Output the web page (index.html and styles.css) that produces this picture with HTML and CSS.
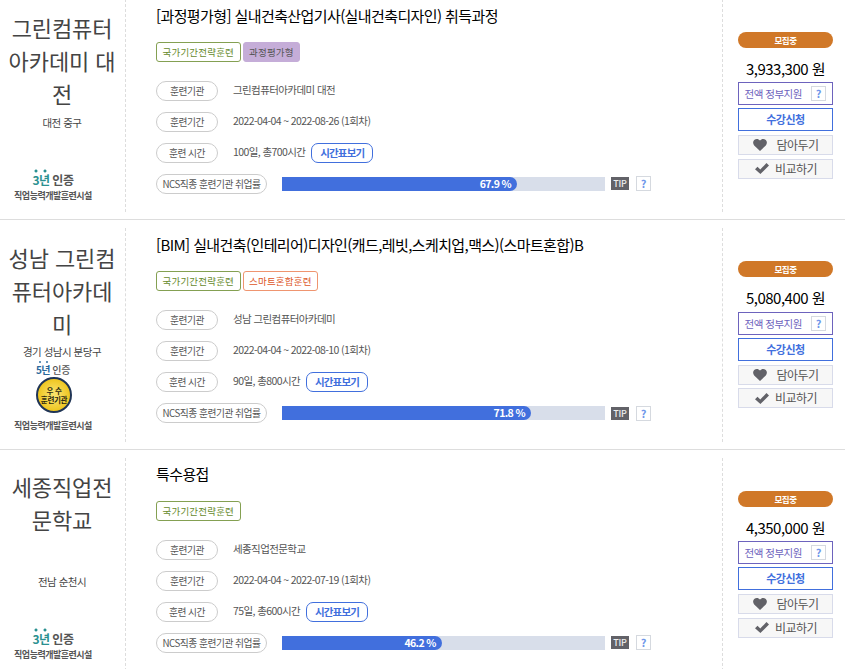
FILE: index.html
```
<!DOCTYPE html>
<html lang="ko">
<head>
    <meta charset="UTF-8">
    <meta name="viewport" content="width=device-width, initial-scale=1.0">
    <title>훈련과정 검색</title>
    <link rel="stylesheet" href="styles.css">
</head>
<body>
    <!-- Shared icons -->
    <svg class="sprite" width="0" height="0">
        <symbol id="icon-heart" viewBox="0 0 14 12">
            <path d="M7 12 1.2 6.4C-.3 4.8-.2 2.2 1.2 1 2.9-.5 5.6-.3 7 1.6 8.4-.3 11.1-.5 12.8 1c1.4 1.2 1.5 3.8 0 5.4z"/>
        </symbol>
        <symbol id="icon-check" viewBox="0 0 14 11">
            <path d="M0 6.2 2.5 3.7 5.3 6.4 11.5 0 14 2.4 5.4 11z"/>
        </symbol>
    </svg>

    <ul class="course-list">
        <li class="course">
            <div class="org">
                <div class="org-name">그린컴퓨터아카데미 대전</div>
                <div class="org-area">대전 중구</div>
                <div class="cert">
                    <div class="cert-head"><span class="cert-year">3년</span> 인증</div>
                    <div class="cert-name">직업능력개발훈련시설</div>
                </div>
            </div>
            <div class="info">
                <h3 class="title">[과정평가형] 실내건축산업기사(실내건축디자인) 취득과정</h3>
                <div class="tags">
                    <span class="tag tag-green">국가기간전략훈련</span>
                    <span class="tag tag-purple">과정평가형</span>
                </div>
                <div class="row"><span class="label">훈련기관</span><span class="value">그린컴퓨터아카데미 대전</span></div>
                <div class="row"><span class="label">훈련기간</span><span class="value">2022-04-04 ~ 2022-08-26 (1회차)</span></div>
                <div class="row"><span class="label">훈련 시간</span><span class="value">100일, 총700시간</span><button type="button" class="btn-time">시간표보기</button></div>
                <div class="row">
                    <span class="label label-wide">NCS직종 훈련기관 취업률</span>
                    <div class="bar"><div class="bar-fill" style="width: 72.8%">67.9 %</div></div>
                    <span class="tip">TIP</span><span class="help">?</span>
                </div>
            </div>
            <div class="side">
                <div class="status">모집중</div>
                <div class="price">3,933,300 원</div>
                <div class="support">전액 정부지원<span class="help">?</span></div>
                <button type="button" class="btn-apply">수강신청</button>
                <button type="button" class="btn-gray btn-keep"><svg width="14" height="12"><use href="#icon-heart"/></svg>담아두기</button>
                <button type="button" class="btn-gray btn-compare"><svg width="14" height="11"><use href="#icon-check"/></svg>비교하기</button>
            </div>
        </li>

        <li class="course">
            <div class="org">
                <div class="org-name">성남 그린컴퓨터아카데미</div>
                <div class="org-area">경기 성남시 분당구</div>
                <div class="cert cert-best">
                    <div class="cert-head"><span class="cert-year">5년</span> 인증</div>
                    <div class="cert-seal"><span>우 수</span><span>훈련기관</span></div>
                    <div class="cert-name">직업능력개발훈련시설</div>
                </div>
            </div>
            <div class="info">
                <h3 class="title">[BIM] 실내건축(인테리어)디자인(캐드,레빗,스케치업,맥스)(스마트혼합)B</h3>
                <div class="tags">
                    <span class="tag tag-green">국가기간전략훈련</span>
                    <span class="tag tag-orange">스마트혼합훈련</span>
                </div>
                <div class="row"><span class="label">훈련기관</span><span class="value">성남 그린컴퓨터아카데미</span></div>
                <div class="row"><span class="label">훈련기간</span><span class="value">2022-04-04 ~ 2022-08-10 (1회차)</span></div>
                <div class="row"><span class="label">훈련 시간</span><span class="value">90일, 총800시간</span><button type="button" class="btn-time">시간표보기</button></div>
                <div class="row">
                    <span class="label label-wide">NCS직종 훈련기관 취업률</span>
                    <div class="bar"><div class="bar-fill" style="width: 77.1%">71.8 %</div></div>
                    <span class="tip">TIP</span><span class="help">?</span>
                </div>
            </div>
            <div class="side">
                <div class="status">모집중</div>
                <div class="price">5,080,400 원</div>
                <div class="support">전액 정부지원<span class="help">?</span></div>
                <button type="button" class="btn-apply">수강신청</button>
                <button type="button" class="btn-gray btn-keep"><svg width="14" height="12"><use href="#icon-heart"/></svg>담아두기</button>
                <button type="button" class="btn-gray btn-compare"><svg width="14" height="11"><use href="#icon-check"/></svg>비교하기</button>
            </div>
        </li>

        <li class="course">
            <div class="org">
                <div class="org-name">세종직업전문학교</div>
                <div class="org-area">전남 순천시</div>
                <div class="cert">
                    <div class="cert-head"><span class="cert-year">3년</span> 인증</div>
                    <div class="cert-name">직업능력개발훈련시설</div>
                </div>
            </div>
            <div class="info">
                <h3 class="title">특수용접</h3>
                <div class="tags">
                    <span class="tag tag-green">국가기간전략훈련</span>
                </div>
                <div class="row"><span class="label">훈련기관</span><span class="value">세종직업전문학교</span></div>
                <div class="row"><span class="label">훈련기간</span><span class="value">2022-04-04 ~ 2022-07-19 (1회차)</span></div>
                <div class="row"><span class="label">훈련 시간</span><span class="value">75일, 총600시간</span><button type="button" class="btn-time">시간표보기</button></div>
                <div class="row">
                    <span class="label label-wide">NCS직종 훈련기관 취업률</span>
                    <div class="bar"><div class="bar-fill" style="width: 49.5%">46.2 %</div></div>
                    <span class="tip">TIP</span><span class="help">?</span>
                </div>
            </div>
            <div class="side">
                <div class="status">모집중</div>
                <div class="price">4,350,000 원</div>
                <div class="support">전액 정부지원<span class="help">?</span></div>
                <button type="button" class="btn-apply">수강신청</button>
                <button type="button" class="btn-gray btn-keep"><svg width="14" height="12"><use href="#icon-heart"/></svg>담아두기</button>
                <button type="button" class="btn-gray btn-compare"><svg width="14" height="11"><use href="#icon-check"/></svg>비교하기</button>
            </div>
        </li>
    </ul>
</body>
</html>
```

FILE: styles.css
```
* {
    box-sizing: border-box;
}
html {
    overflow: hidden;
}
body {
    margin: 0;
    height: 669px;
    overflow: hidden;
    background-color: #fff;
    color: #444;
    font-family: "Noto Sans CJK KR", sans-serif;
}
button {
    padding: 0;
    font-family: inherit;
    cursor: pointer;
}
.sprite {
    display: block;
}
.course-list {
    width: 845px;
    margin: -9.5px 0 0;
    padding: 0;
    list-style: none;
}
.course {
    display: flex;
    height: 229.5px;
    padding: 8px 0 7px;
    border-bottom: 1px solid #ddd;
}

/* Training institute */
.org {
    display: flex;
    flex-direction: column;
    width: 126px;
    padding: 12.5px 1px 9px 0;
    border-right: 1px dashed #ddd;
    text-align: center;
}
.org-name {
    min-height: 99px;
    padding: 0 6px;
    font-size: 22px;
    line-height: 33px;
    letter-spacing: -0.1px;
    word-break: break-all;
}
.org-area {
    margin-top: 4.5px;
    font-size: 10.5px;
    line-height: 16px;
    letter-spacing: -0.5px;
}
.cert {
    width: 80px;
    margin: auto 0 0 13px;
    color: #555;
    font-weight: 700;
}
.cert-head {
    font-size: 12px;
    line-height: 16px;
    letter-spacing: -0.4px;
}
.cert-year {
    padding-top: 2px;
    background: radial-gradient(circle at 4px 2px, #2a9090 1.2px, transparent 1.8px),
                radial-gradient(circle at 13px 2px, #2a9090 1.2px, transparent 1.8px);
    color: #2a9090;
    letter-spacing: -0.6px;
}
.cert-name {
    font-size: 9px;
    line-height: 15px;
    letter-spacing: -0.5px;
    white-space: nowrap;
}
.cert-best .cert-head {
    font-size: 10px;
    font-weight: 500;
    line-height: 13px;
}
.cert-best .cert-year {
    background: radial-gradient(circle at 4px 2px, #28689c 0.5px, transparent 1.2px),
                radial-gradient(circle at 11px 2px, #28689c 0.5px, transparent 1.2px);
    color: #28689c;
    font-weight: 700;
}
.cert-seal {
    display: flex;
    flex-direction: column;
    align-items: center;
    justify-content: center;
    width: 36px;
    height: 36px;
    margin: 1px 0 5px 23px;
    border: 2px solid #203556;
    border-radius: 50%;
    background: radial-gradient(#f8e066 15%, #eec41a 75%, #b08a20);
    color: #2a2810;
    font-size: 7.5px;
    line-height: 9px;
    letter-spacing: -0.3px;
    white-space: nowrap;
}

/* Course details */
.info {
    width: 597px;
    padding: 4.5px 0 0 30px;
    border-right: 1px dashed #ddd;
}
.title {
    margin: 0;
    color: #000;
    font-size: 15px;
    font-weight: 400;
    line-height: 24px;
    letter-spacing: -0.6px;
}
.course:first-child .title {
    padding-top: 1px;
    margin-bottom: -1px;
}
.tags {
    display: flex;
    gap: 2px;
    margin: 14.5px 0 19px;
}
.tag {
    height: 20px;
    padding: 0 5.5px;
    border: 1px solid;
    border-radius: 3px;
    font-size: 9.5px;
    line-height: 18px;
    letter-spacing: 0.2px;
}
.tag-green {
    border-color: #84a052;
    color: #668a2d;
}
.tag-purple {
    border-color: #c5add8;
    background-color: #c5add8;
    color: #555;
}
.tag-orange {
    border-color: #ef9570;
    color: #dd5527;
}
.row {
    display: flex;
    align-items: center;
    height: 20px;
    margin-bottom: 11px;
}
.label {
    width: 62px;
    height: 20px;
    margin-right: 15px;
    border: 1px solid #ccc;
    border-radius: 10px;
    color: #555;
    font-size: 9.75px;
    line-height: 18px;
    letter-spacing: -0.5px;
    text-align: center;
}
.label-wide {
    width: 111px;
}
.value {
    padding-bottom: 1.5px;
    font-size: 10.5px;
    line-height: 18px;
    letter-spacing: -0.6px;
    color: #555;
}
.btn-time {
    width: 62px;
    height: 20px;
    margin-left: 6px;
    border: 1px solid #416fdd;
    border-radius: 7px;
    background-color: #fff;
    color: #416fdd;
    font-size: 10.5px;
    font-weight: 700;
    line-height: 18px;
    letter-spacing: -0.8px;
}
.bar {
    width: 323px;
    height: 14px;
    background-color: #d8deea;
}
.bar-fill {
    height: 14px;
    padding-right: 6px;
    border-radius: 0 7px 7px 0;
    background-color: #416fdd;
    color: #fff;
    font-size: 10.5px;
    font-weight: 700;
    line-height: 14px;
    letter-spacing: -0.6px;
    text-align: right;
}
.tip {
    width: 18px;
    height: 13px;
    margin: 0 7px 0 6px;
    background-color: #626268;
    color: #eee;
    font-size: 9px;
    font-weight: 500;
    line-height: 13px;
    letter-spacing: -0.2px;
    text-align: center;
}
.help {
    width: 15px;
    height: 15px;
    border: 1px solid #d5d9df;
    background-color: #fff;
    color: #6f97ea;
    font-size: 11px;
    font-weight: 700;
    line-height: 13px;
    letter-spacing: 0;
    text-align: center;
}

/* Price and actions */
.side {
    display: flex;
    flex-direction: column;
    width: 110px;
    padding: 33px 0 0 15px;
}
.status {
    height: 16px;
    border-radius: 8px;
    background-color: #d07828;
    color: #fff;
    font-size: 8.5px;
    font-weight: 700;
    line-height: 16px;
    letter-spacing: -0.5px;
    text-align: center;
}
.price {
    height: 24.5px;
    margin: 10px 0 0;
    color: #000;
    font-size: 15px;
    line-height: 22px;
    letter-spacing: -0.5px;
    text-align: center;
}
.support {
    display: flex;
    align-items: center;
    justify-content: space-between;
    height: 23px;
    padding: 0 6px 0 5.5px;
    border: 1px solid #6d63bd;
    color: #6d63bd;
    font-size: 10.5px;
    letter-spacing: -0.5px;
}
.btn-apply {
    height: 23px;
    margin: 3px 0 4px;
    border: 1px solid #416fdd;
    background-color: #fff;
    color: #416fdd;
    font-size: 11px;
    font-weight: 700;
    line-height: 21px;
    letter-spacing: -0.5px;
}
.btn-gray {
    display: flex;
    align-items: center;
    height: 20px;
    margin-bottom: 3.5px;
    padding: 0 0 0 14px;
    border: 1px solid #d8dbea;
    background-color: #f7f7f7;
    color: #555;
    font-size: 12px;
    line-height: 18px;
    letter-spacing: -0.5px;
}
.btn-gray svg {
    margin-right: 9.5px;
    fill: #626268;
}
.btn-compare {
    padding-left: 16px;
}
.btn-compare svg {
    margin-right: 6px;
}
```
